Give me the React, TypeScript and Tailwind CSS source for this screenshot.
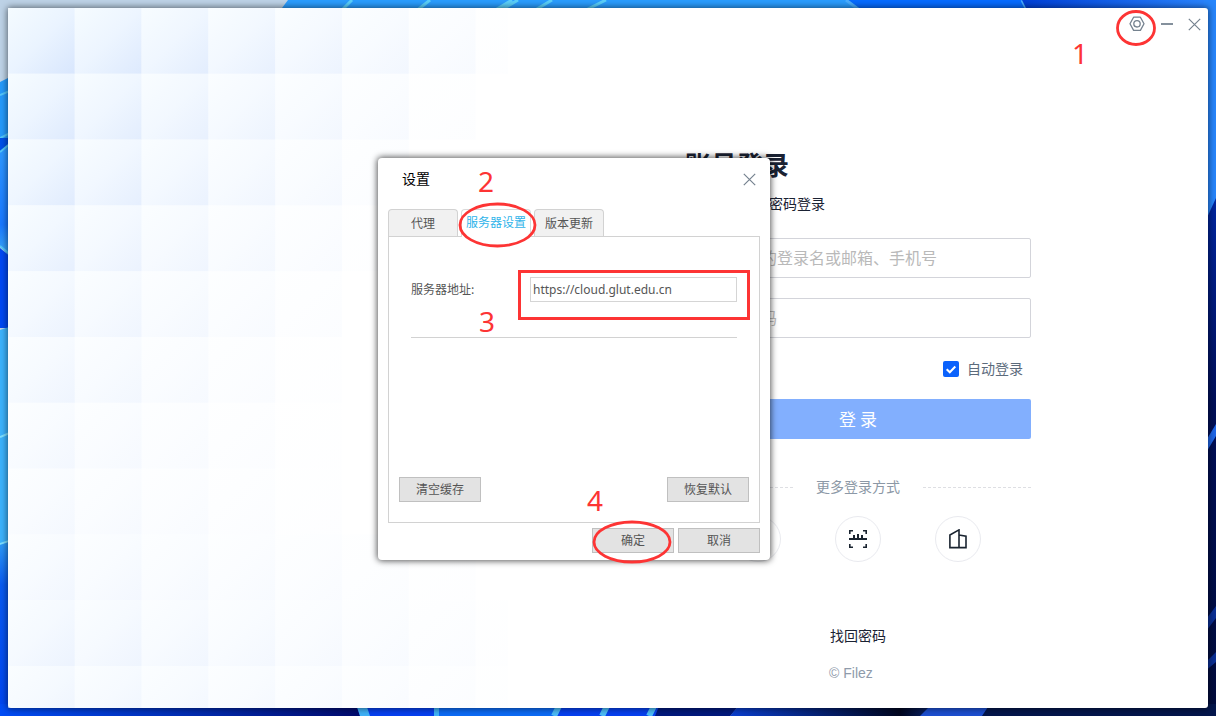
import type { ReactNode } from "react"

type IconButtonProps = {
    label: string;
    className: string;
    children: ReactNode;
}

type DialogButtonProps = {
    children: ReactNode;
}

type MarkProps = {
    className: string;
    children: ReactNode;
}

const TILE_W = 66.8;
const TILE_H = 65.8;

// strength and reach (in columns) of each row of tiles
const tileRows = [
    { strength: 0.95, reach: 7.5 },
    { strength: 0.82, reach: 6.5 },
    { strength: 0.75, reach: 6 },
    { strength: 0.6, reach: 5.5 },
    { strength: 0.48, reach: 5 },
    { strength: 0.4, reach: 4.5 },
    { strength: 0.3, reach: 4.5 },
    { strength: 0.27, reach: 5 },
    { strength: 0.34, reach: 7 },
    { strength: 0.46, reach: 8 },
    { strength: 0.46, reach: 8 },
];

const TileArt = () => (
    <svg className="w-[500px] h-full shrink-0" viewBox="0 0 500 700" preserveAspectRatio="none" aria-hidden="true">
        <defs>
            <linearGradient id="tile" x1="0" y1="0" x2="1" y2="1">
                <stop offset="0" stopColor="#f4fbff" />
                <stop offset="0.5" stopColor="#e9f3ff" />
                <stop offset="1" stopColor="#d6e5fd" />
            </linearGradient>
        </defs>
        {tileRows.map((row, r) =>
            [0, 1, 2, 3, 4, 5, 6, 7].map((c) => (
                <rect
                    key={`${r}-${c}`}
                    x={c * TILE_W}
                    y={r * TILE_H}
                    width={TILE_W}
                    height={TILE_H}
                    fill="url(#tile)"
                    opacity={Math.max(0, row.strength * (1 - c / row.reach))}
                />
            ))
        )}
    </svg>
)

const Wallpaper = () => (
    <svg className="absolute inset-0 w-full h-full" viewBox="0 0 1216 716" preserveAspectRatio="none" aria-hidden="true">
        <defs>
            <linearGradient id="topRight" x1="0" x2="1">
                <stop offset="0" stopColor="#003fd6" />
                <stop offset="1" stopColor="#2a86ff" />
            </linearGradient>
            <linearGradient id="bottomLeft" x1="0" x2="1">
                <stop offset="0" stopColor="#004cf5" />
                <stop offset="0.6" stopColor="#0027a8" />
                <stop offset="1" stopColor="#000a6e" />
            </linearGradient>
            <linearGradient id="bottomRight" x1="0" x2="1">
                <stop offset="0" stopColor="#0a3fd0" />
                <stop offset="0.35" stopColor="#000620" />
                <stop offset="0.5" stopColor="#1447c8" />
                <stop offset="1" stopColor="#031a50" />
            </linearGradient>
            <linearGradient id="leftBlue" x1="0" y1="0" x2="0" y2="1">
                <stop offset="0" stopColor="#2f9bff" />
                <stop offset="0.7" stopColor="#1a78ff" />
                <stop offset="1" stopColor="#3fb0f5" />
            </linearGradient>
            <linearGradient id="leftLow" x1="0" y1="0" x2="0" y2="1">
                <stop offset="0" stopColor="#2f9cf5" />
                <stop offset="0.25" stopColor="#0a5bf0" />
                <stop offset="1" stopColor="#0044f0" />
            </linearGradient>
            <linearGradient id="rightDark" x1="0" y1="0" x2="0" y2="1">
                <stop offset="0" stopColor="#0026a0" />
                <stop offset="0.4" stopColor="#000f58" />
                <stop offset="1" stopColor="#020c3c" />
            </linearGradient>
        </defs>
        <rect width="1216" height="716" fill="#bdd2e6" />

        {/* top edge */}
        <path d="M276 16L288 0H900V16Z" fill="#2a9dfe" />
        <path d="M340 12L352 0M415 12L430 0M492 12L512 0M498 12L518 0M532 12L552 0M582 12L606 0" stroke="#5bd0fa" strokeWidth="3" />
        <path d="M862 12L846 0H1030V12Z" fill="#066bff" />
        <path d="M862 12L846 0M1028 12L1022 0" stroke="#4aaeff" strokeWidth="3" />
        <path d="M1028 12L1022 0H1216V12Z" fill="url(#topRight)" />

        {/* left edge */}
        <path d="M0 82L12 76V140H0Z" fill="#2599fa" />
        <path d="M0 95L12 90M0 138L12 132" stroke="#53c6fa" strokeWidth="2" />
        <rect y="138" width="12" height="14" fill="#0050e8" />
        <path d="M0 152L12 142V260L0 246Z" fill="url(#leftBlue)" />
        <path d="M0 152L12 142M0 246L12 256" stroke="#53c6fa" strokeWidth="2" />
        <path d="M0 248L12 258V328H0Z" fill="#0048f2" />
        <path d="M0 330L12 326V545H0Z" fill="#3cb2fc" />
        <path d="M0 437L12 432M0 544L12 540" stroke="#7fe0ff" strokeWidth="2" />
        <path d="M0 545L12 541V716H0Z" fill="url(#leftLow)" />

        {/* right edge */}
        <path d="M1204 0H1216V200L1204 224Z" fill="#2785fb" />
        <path d="M1204 224L1216 198V716H1204Z" fill="url(#rightDark)" />
        <path d="M1204 444L1216 424V436L1204 456Z" fill="#1f66e8" />
        <path d="M1204 622L1216 606V618L1204 634ZM1204 664L1216 652V662L1204 672Z" fill="#0b2f94" />

        {/* bottom edge */}
        <rect y="704" width="360" height="12" fill="url(#bottomLeft)" />
        <path d="M356 704H740L730 716H360Z" fill="#0640f0" />
        <path d="M356 704H366L370 716H360ZM434 704H439V716H434Z" fill="#3fb2f8" />
        <path d="M439 704H560L554 716H439Z" fill="#0c6bf5" />
        <path d="M560 704L554 716M608 704L602 716M655 704L649 716" stroke="#4cbcf8" strokeWidth="6" />
        <path d="M740 704H1216V716H730Z" fill="url(#bottomRight)" />
        <path d="M660 704H740L730 716H655Z" fill="#00187c" />
        <path d="M932 704H990L982 716H920Z" fill="#1d4fd0" />
        <path d="M990 704H1216V716H982Z" fill="#04164c" />
    </svg>
)

const CrossIcon = () => (
    <svg width="13" height="13" viewBox="0 0 13 13" fill="none" stroke="#75828f" strokeWidth="1.2">
        <path d="M.8.8L12.2 12.2M12.2.8L.8 12.2" />
    </svg>
)

const IconButton = ({ label, className, children }: IconButtonProps) => (
    <button type="button" aria-label={label} className={`flex items-center justify-center ${className}`}>
        {children}
    </button>
)

const LoginMethod = ({ label, children }: { label: string; children: ReactNode }) => (
    <button
        type="button"
        aria-label={label}
        className="flex items-center justify-center w-[46px] h-[46px] rounded-full border border-[#e9eaef]"
    >
        {children}
    </button>
)

const DialogButton = ({ children }: DialogButtonProps) => (
    <button type="button" className="w-[82px] h-[25px] pb-[2px] bg-[#e3e3e3] border border-[#c0c0c0] text-xs text-[#555]">
        {children}
    </button>
)

const Mark = ({ className, children }: MarkProps) => (
    <span className={`absolute font-['Noto_Sans',sans-serif] text-[28px] leading-8 text-[#fd3434] ${className}`}>
        {children}
    </span>
)

const SettingsDialog = () => (
    <section
        role="dialog"
        aria-label="设置"
        className="absolute left-[370px] top-[150px] w-[392px] px-[10px] pb-[7px] bg-white rounded-sm shadow-[0_0_6px_1px_rgba(0,0,0,0.65)]"
    >
        <header className="flex items-center justify-between h-[42px] pl-[14px] pr-1 text-sm text-black">
            <h2 className="pb-[2px]">设置</h2>
            <IconButton label="关闭设置" className="w-[14px] h-8">
                <CrossIcon />
            </IconButton>
        </header>

        {/* TABS */}
        <div role="tablist" className="flex gap-[3px] mt-[9px] text-xs text-[#555]">
            <button type="button" role="tab" aria-selected="false" className="w-[70px] h-[27px] pb-px bg-[#f1f1f1] border border-b-0 border-[#d2d2d2] rounded-t-sm">
                代理
            </button>
            <button type="button" role="tab" aria-selected="true" className="relative w-[70px] h-7 -mb-px pb-[3px] bg-white border border-b-0 border-[#d9d9d9] rounded-t-sm text-[#2fb4ea]">
                服务器设置
            </button>
            <button type="button" role="tab" aria-selected="false" className="w-[70px] h-[27px] pb-px bg-[#f1f1f1] border border-b-0 border-[#d2d2d2] rounded-t-sm">
                版本更新
            </button>
        </div>

        {/* SERVER PANEL */}
        <div role="tabpanel" className="flex flex-col h-[287px] px-[10px] pb-5 border border-[#d2d2d2]">
            <div className="flex items-center justify-between mx-3 mt-10 pb-[35px] border-b border-[#d2d2d2] text-xs text-[#555]">
                <label htmlFor="server" className="pb-px">服务器地址:</label>
                <input
                    id="server"
                    defaultValue="https://cloud.glut.edu.cn"
                    className="w-[207px] h-[25px] px-[2px] border border-[#d5d5d5] font-['Noto_Sans',sans-serif] text-xs text-[#555] outline-none"
                />
            </div>
            <div className="flex justify-between mt-auto">
                <DialogButton>清空缓存</DialogButton>
                <DialogButton>恢复默认</DialogButton>
            </div>
        </div>

        <footer className="flex justify-end gap-1 mt-[5px]">
            <DialogButton>确定</DialogButton>
            <DialogButton>取消</DialogButton>
        </footer>

        {/* STEP MARKS */}
        <Mark className="left-[100px] top-[7px]">2</Mark>
        <svg className="absolute left-[80px] top-[44px] pointer-events-none" width="80" height="46" fill="none" aria-hidden="true">
            <ellipse cx="39.5" cy="23" rx="37.5" ry="21" stroke="#fd3434" strokeWidth="2.8" />
        </svg>
        <Mark className="left-[101px] top-[147px]">3</Mark>
        <div className="absolute left-[140px] top-[112px] w-[232px] h-[50px] border-3 border-[#fd3434] pointer-events-none" />
        <Mark className="left-[209px] top-[326px]">4</Mark>
        <svg className="absolute left-[214px] top-[362px] pointer-events-none" width="80" height="46" fill="none" aria-hidden="true">
            <ellipse cx="40" cy="22" rx="38" ry="20" stroke="#fd3434" strokeWidth="2.8" />
        </svg>
    </section>
)

const LoginForm = () => (
    <form className="flex flex-col w-[346px] mx-auto mt-[106px] text-sm text-[#1a2233]">
        <h1 className="text-[26px] leading-9 font-bold">账号登录</h1>
        <p className="mt-[11px] leading-5">使用您的账号密码登录</p>

        <input
            aria-label="登录名"
            placeholder="请输入您的登录名或邮箱、手机号"
            className="mt-[25px] h-10 px-[11px] pb-[2px] border border-[#d3d4da] rounded-xs text-base placeholder:text-[#b9b9b9]"
        />
        <input
            type="password"
            aria-label="密码"
            placeholder="请输入密码"
            className="mt-5 h-10 px-[11px] pb-[2px] border border-[#d3d4da] rounded-xs text-base placeholder:text-[#b9b9b9]"
        />

        <label className="flex items-center justify-end gap-2 mt-5 pr-2 leading-5 text-[#5c6b7c]">
            <span className="grid">
                <input type="checkbox" defaultChecked className="col-start-1 row-start-1 appearance-none w-4 h-4 rounded-xs bg-[#0b62fc]" />
                <svg className="col-start-1 row-start-1 pointer-events-none" width="16" height="16" fill="none" stroke="#fff" strokeWidth="2">
                    <path d="M3.7 8.2L6.8 11.3L12.3 5.5" />
                </svg>
            </span>
            <span className="pb-[2px]">自动登录</span>
        </label>

        <button type="button" className="mt-[19px] h-10 rounded-xs bg-[#82affe] text-[17px] text-white">
            登 录
        </button>

        <div className="flex items-center justify-between mt-[37px] leading-5 text-[#8c98a6]">
            <span className="w-[108px] border-t border-dashed border-[#dedfe3]" />
            <span className="pb-[2px]">更多登录方式</span>
            <span className="w-[108px] border-t border-dashed border-[#dedfe3]" />
        </div>

        <div className="flex justify-center gap-[54px] mt-[18px]">
            <LoginMethod label="手机登录">
                <svg width="18" height="18" fill="none" stroke="#1a2233" strokeWidth="1.6">
                    <rect x="4" y="1" width="10" height="16" />
                </svg>
            </LoginMethod>
            <LoginMethod label="扫码登录">
                <svg width="18" height="18" fill="none" stroke="#1a2430">
                    <path d="M.8 4V.8H4M14 .8H17.2V4M.8 14V17.2H4M14 17.2H17.2V14" strokeWidth="1.6" />
                    <path d="M0 9H18" strokeWidth="2" />
                    <path d="M5 9V5M9 9V4M13 9V5" strokeWidth="2" />
                </svg>
            </LoginMethod>
            <LoginMethod label="企业登录">
                <svg width="18" height="20" fill="none" stroke="#1a2430" strokeWidth="1.6">
                    <path d="M.9 18.6V6L10 .9V18.6ZM10 6L17 7.2V18.6H10" />
                </svg>
            </LoginMethod>
        </div>

        <a href="#" className="self-center mt-[63px] leading-5">找回密码</a>
        <p className="mt-[18px] pr-[14px] text-center leading-5 font-['Liberation_Sans',sans-serif] text-[#8f9bab]">© Filez</p>
    </form>
)

const App = () => {
    return (
        <div className="relative min-h-screen p-2 flex overflow-hidden font-['Noto_Sans_CJK_SC',sans-serif]">
            <Wallpaper />
            <main className="relative flex flex-1 bg-white rounded-[3px] shadow-[0_0_6px_1px_rgba(0,0,0,0.5)]">
                <TileArt />
                <div className="flex-1">
                    <header className="flex justify-end pr-[2px]">
                        <IconButton label="设置" className="w-[30px] h-8">
                            <svg width="16" height="16" fill="none" stroke="#75828f" strokeWidth="1.3">
                                <path d="M4.6 1.2H11.4L15 7.8L11.4 14.4H4.6L1 7.8Z" strokeLinejoin="round" />
                                <circle cx="8" cy="7.8" r="3.2" />
                            </svg>
                        </IconButton>
                        <IconButton label="最小化" className="w-[30px] h-8">
                            <span className="w-3 h-[2px] bg-[#84909c]" />
                        </IconButton>
                        <IconButton label="关闭" className="w-6 h-8">
                            <CrossIcon />
                        </IconButton>
                    </header>
                    <LoginForm />
                </div>

                <Mark className="right-[120px] top-[29px]">1</Mark>
                <svg className="absolute right-[51px] top-[1px] pointer-events-none" width="42" height="38" fill="none" aria-hidden="true">
                    <ellipse cx="21" cy="19" rx="18.5" ry="16.5" stroke="#fd3434" strokeWidth="2.8" />
                </svg>

                <SettingsDialog />
            </main>
        </div>
    )
}

export default App
